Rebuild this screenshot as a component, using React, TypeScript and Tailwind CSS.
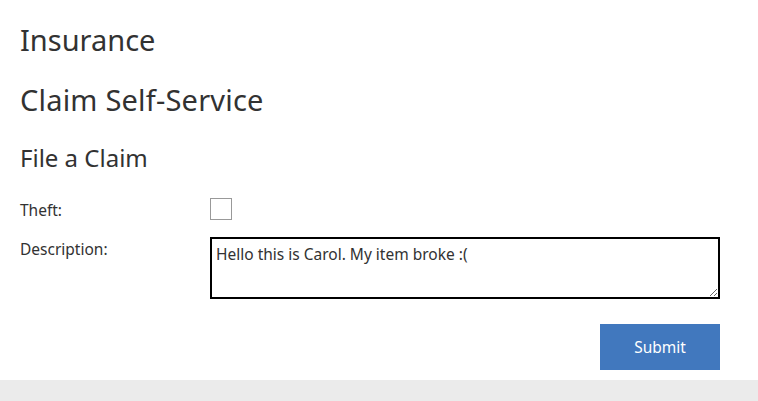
export default function App() {
  return (
    <div className="min-h-[401px] bg-white text-[#323232] flex flex-col" style={{ fontFamily: '"Noto Sans", "Open Sans", sans-serif' }}>
      <div className="w-[740px] px-5 pt-5">
        <h1 className="text-[29px] leading-[40px]">Insurance</h1>
        <h2 className="mt-5 text-[29px] leading-[40px] tracking-[0.2px]">Claim Self-Service</h2>
        <h3 className="mt-[23px] text-[24px] leading-[30px]">File a Claim</h3>

        <div className="mt-[25px] grid grid-cols-[190px_1fr] gap-y-[15px] items-start">
          <label className="text-[15.5px] leading-6">Theft:</label>
          <input type="checkbox" className="appearance-none w-[22px] h-[22px] border border-[#999] bg-white" />

          <label className="text-[15.5px] leading-6">Description:</label>
          <textarea
            defaultValue="Hello this is Carol. My item broke :("
            className="block w-full h-[62px] border-2 border-black px-1 pt-[3px] text-[15.5px] leading-6 text-[#323232] outline-none"
          />
        </div>

        <div className="mt-[25px] flex justify-end">
          <button className="w-[120px] h-[46px] pt-[2px] bg-[#4178be] text-white text-[15.5px]">Submit</button>
        </div>
      </div>
      <div className="mt-[10px] flex-1 bg-[#ebebeb]" />
    </div>
  );
}
